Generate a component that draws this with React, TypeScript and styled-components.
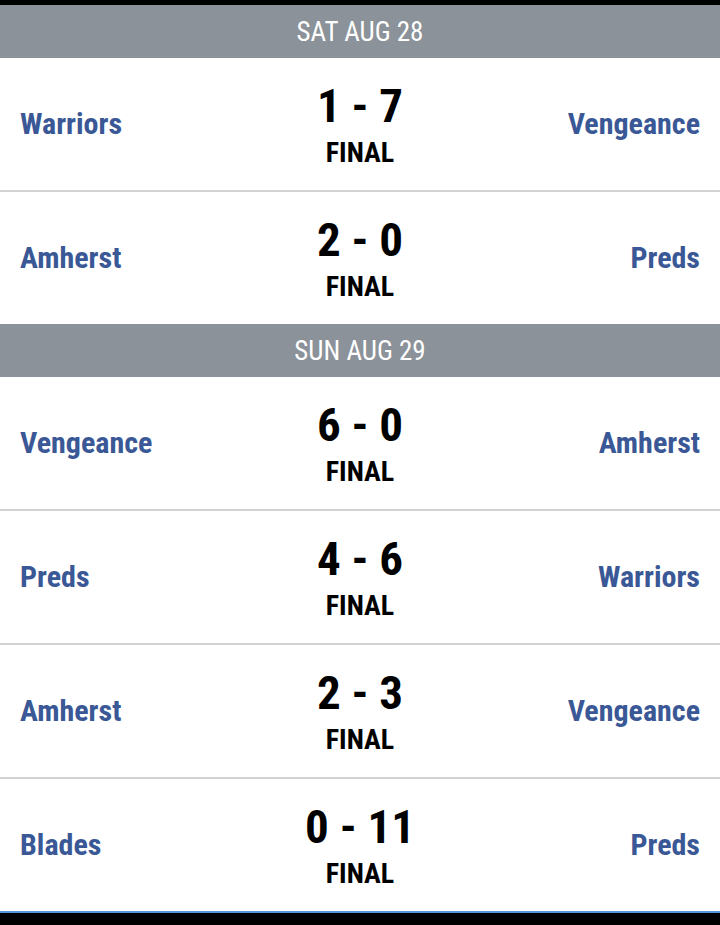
import React from "react";
import styled, { createGlobalStyle } from "styled-components";

const Global = createGlobalStyle`
  html, body { margin: 0; padding: 0; background: #000; }
  body { font-family: "Roboto Condensed", Roboto, "Liberation Sans", sans-serif; }
`;

const Page = styled.div`
  padding-top: 5px;
  background: #000;
  min-height: 925px;
  box-sizing: border-box;
`;

const List = styled.div`
  background: #fff;
  border-bottom: 2px solid #5a95e0;
`;

const DayHeader = styled.div`
  height: 53px;
  background: #8b9299;
  color: #fff;
  display: flex;
  align-items: center;
  justify-content: center;
  font-size: 27px;
  font-weight: 400;
  font-stretch: condensed;
`;

const Row = styled.div`
  height: 132px;
  display: grid;
  grid-template-columns: 1fr auto 1fr;
  align-items: center;
  padding: 0 20px;
  & + & { border-top: 2px solid #d2d2d2; }
`;

const Team = styled.div<{ $align: "left" | "right" }>`
  color: #3a5896;
  font-weight: 700;
  font-size: 30px;
  line-height: 30px;
  font-stretch: condensed;
  text-align: ${(p) => p.$align};
  margin-top: 0;
`;

const Center = styled.div`
  display: flex;
  flex-direction: column;
  align-items: center;
  color: #000;
  font-weight: 700;
  font-stretch: condensed;
`;

const Score = styled.div`
  font-size: 47px;
  line-height: 47px;
`;

const Status = styled.div`
  font-size: 28px;
  line-height: 28px;
  margin-top: 10px;
`;

type Game = { home: string; away: string; score: string };
const days: { label: string; games: Game[] }[] = [
  {
    label: "SAT AUG 28",
    games: [
      { home: "Warriors", away: "Vengeance", score: "1 - 7" },
      { home: "Amherst", away: "Preds", score: "2 - 0" },
    ],
  },
  {
    label: "SUN AUG 29",
    games: [
      { home: "Vengeance", away: "Amherst", score: "6 - 0" },
      { home: "Preds", away: "Warriors", score: "4 - 6" },
      { home: "Amherst", away: "Vengeance", score: "2 - 3" },
      { home: "Blades", away: "Preds", score: "0 - 11" },
    ],
  },
];

export default function App() {
  return (
    <Page>
      <Global />
      <List>
        {days.map((d) => (
          <section key={d.label}>
            <DayHeader>{d.label}</DayHeader>
            {d.games.map((g, i) => (
              <Row key={i}>
                <Team $align="left">{g.home}</Team>
                <Center>
                  <Score>{g.score}</Score>
                  <Status>FINAL</Status>
                </Center>
                <Team $align="right">{g.away}</Team>
              </Row>
            ))}
          </section>
        ))}
      </List>
    </Page>
  );
}
